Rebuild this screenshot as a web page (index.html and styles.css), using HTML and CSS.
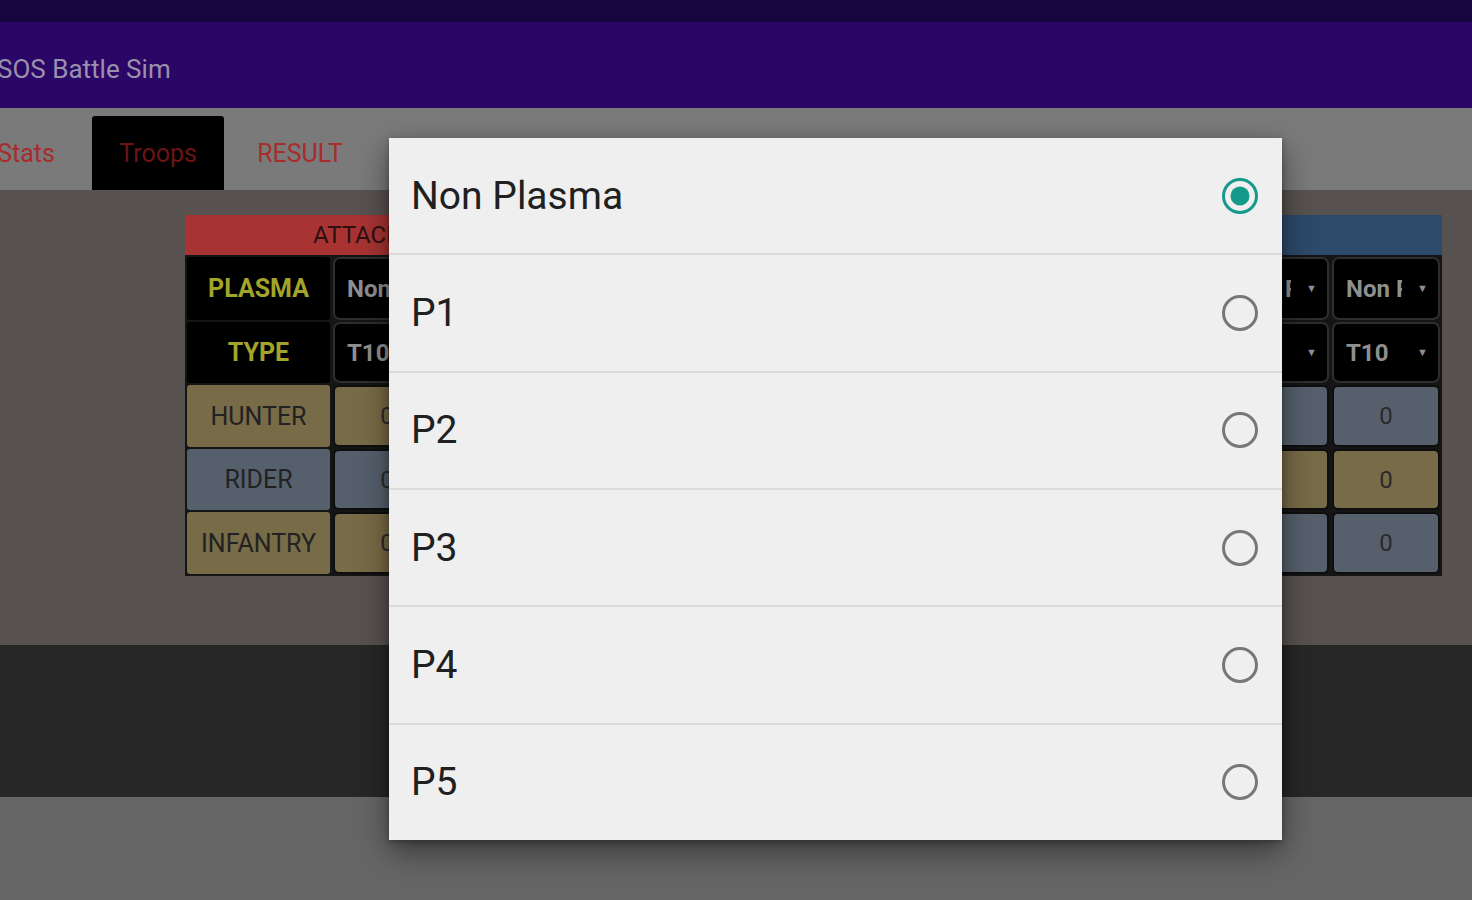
FILE: index.html
```html
<!DOCTYPE html>
<html>
<head>
<meta charset="utf-8">
<title>SOS Battle Sim</title>
<link rel="stylesheet" href="styles.css">
</head>
<body>
<div class="app">
  <div class="statusbar"></div>
  <header class="toolbar"><span class="title">SOS Battle Sim</span></header>
  <nav class="tabs">
    <div class="tab">Stats</div>
    <div class="tab active">Troops</div>
    <div class="tab wide">RESULT</div>
  </nav>
  <main class="content">
    <div class="table">
      <div class="head attacker">ATTACKER</div>
      <div class="head defender">DEFENDER</div>

      <div class="label dark">PLASMA</div>
      <div class="sel"><span class="val">Non Plasma</span><span class="arr">▼</span></div>
      <div class="sel"><span class="val">Non Plasma</span><span class="arr">▼</span></div>
      <div class="sel"><span class="val">Non Plasma</span><span class="arr">▼</span></div>
      <div class="sel"><span class="val">Non Plasma</span><span class="arr">▼</span></div>
      <div class="sel"><span class="val">Non Plasma</span><span class="arr">▼</span></div>
      <div class="sel"><span class="val">Non Plasma</span><span class="arr">▼</span></div>
      <div class="sel"><span class="val">Non Plasma</span><span class="arr">▼</span></div>
      <div class="sel"><span class="val">Non Plasma</span><span class="arr">▼</span></div>
      <div class="sel"><span class="val">Non Plasma</span><span class="arr">▼</span></div>
      <div class="sel"><span class="val">Non Plasma</span><span class="arr">▼</span></div>

      <div class="label dark">TYPE</div>
      <div class="sel"><span class="val">T10</span><span class="arr">▼</span></div>
      <div class="sel"><span class="val">T10</span><span class="arr">▼</span></div>
      <div class="sel"><span class="val">T10</span><span class="arr">▼</span></div>
      <div class="sel"><span class="val">T10</span><span class="arr">▼</span></div>
      <div class="sel"><span class="val">T10</span><span class="arr">▼</span></div>
      <div class="sel"><span class="val">T10</span><span class="arr">▼</span></div>
      <div class="sel"><span class="val">T10</span><span class="arr">▼</span></div>
      <div class="sel"><span class="val">T10</span><span class="arr">▼</span></div>
      <div class="sel"><span class="val">T10</span><span class="arr">▼</span></div>
      <div class="sel"><span class="val">T10</span><span class="arr">▼</span></div>

      <div class="label tan">HUNTER</div>
      <div class="num tan">0</div><div class="num tan">0</div><div class="num tan">0</div><div class="num tan">0</div><div class="num tan">0</div>
      <div class="num blue">0</div><div class="num blue">0</div><div class="num blue">0</div><div class="num blue">0</div><div class="num blue">0</div>

      <div class="label blue">RIDER</div>
      <div class="num blue">0</div><div class="num blue">0</div><div class="num blue">0</div><div class="num blue">0</div><div class="num blue">0</div>
      <div class="num tan">0</div><div class="num tan">0</div><div class="num tan">0</div><div class="num tan">0</div><div class="num tan">0</div>

      <div class="label tan">INFANTRY</div>
      <div class="num tan">0</div><div class="num tan">0</div><div class="num tan">0</div><div class="num tan">0</div><div class="num tan">0</div>
      <div class="num blue">0</div><div class="num blue">0</div><div class="num blue">0</div><div class="num blue">0</div><div class="num blue">0</div>
    </div>
  </main>
  <div class="band"></div>
  <div class="footer"></div>

  <div class="dialog">
    <div class="opt"><span>Non Plasma</span>
      <svg class="radio" viewBox="0 0 40 40" width="40" height="40"><circle cx="20" cy="20" r="16.5" fill="none" stroke="#14998a" stroke-width="3"/><circle cx="20" cy="20" r="9.5" fill="#14998a"/></svg>
    </div>
    <div class="opt"><span>P1</span>
      <svg class="radio" viewBox="0 0 40 40" width="40" height="40"><circle cx="20" cy="20" r="16.5" fill="none" stroke="#777" stroke-width="3"/></svg>
    </div>
    <div class="opt"><span>P2</span>
      <svg class="radio" viewBox="0 0 40 40" width="40" height="40"><circle cx="20" cy="20" r="16.5" fill="none" stroke="#777" stroke-width="3"/></svg>
    </div>
    <div class="opt"><span>P3</span>
      <svg class="radio" viewBox="0 0 40 40" width="40" height="40"><circle cx="20" cy="20" r="16.5" fill="none" stroke="#777" stroke-width="3"/></svg>
    </div>
    <div class="opt"><span>P4</span>
      <svg class="radio" viewBox="0 0 40 40" width="40" height="40"><circle cx="20" cy="20" r="16.5" fill="none" stroke="#777" stroke-width="3"/></svg>
    </div>
    <div class="opt"><span>P5</span>
      <svg class="radio" viewBox="0 0 40 40" width="40" height="40"><circle cx="20" cy="20" r="16.5" fill="none" stroke="#777" stroke-width="3"/></svg>
    </div>
  </div>
</div>
</body>
</html>
```

FILE: styles.css
```css
* { box-sizing: border-box; }
html, body { margin: 0; padding: 0; }
body {
  width: 1472px;
  height: 900px;
  overflow: hidden;
  font-family: Roboto, "Noto Sans", "Liberation Sans", sans-serif;
  background: #666666;
}
.app {
  position: relative;
  width: 1472px;
  height: 900px;
  display: flex;
  flex-direction: column;
  overflow: hidden;
}
.statusbar {
  height: 22px;
  background: #16053f;
}
.toolbar {
  height: 86px;
  background: #2a0767;
  display: flex;
  align-items: center;
  padding-top: 8px;
}
.title {
  margin-left: -3px;
  font-size: 26px;
  color: #9a91ab;
}
.tabs {
  height: 82px;
  background: #7a7a7a;
  display: flex;
  align-items: flex-end;
  margin-left: -40px;
}
.tab {
  width: 132px;
  height: 74px;
  display: flex;
  align-items: center;
  justify-content: center;
  font-size: 25px;
  color: #a82c2c;
}
.tab.active {
  background: #000;
  color: #6d1414;
  border-radius: 3px 3px 0 0;
}
.tab.wide { width: 152px; }
.content {
  height: 455px;
  background: #57524f;
  padding: 25px 0 0 185px;
}
.table {
  width: 1257px;
  display: grid;
  grid-template-columns: 143px repeat(10, minmax(0, 1fr));
  grid-template-rows: 40px 63px 61px 62px 61px 62px;
  gap: 2px 3px;
  padding: 0 2px 2px;
  background: #151515;
}
.head {
  display: flex;
  align-items: center;
  font-size: 24px;
  margin: 0 -2px;
}
.attacker {
  grid-column: 1 / span 6;
  background: #a83333;
  color: #2e1010;
  padding-left: 128px;
}
.defender {
  grid-column: 7 / span 5;
  background: #2c4a6a;
  color: #10202e;
  justify-content: center;
}
.label {
  display: flex;
  align-items: center;
  justify-content: center;
  font-size: 25px;
  color: #222;
  border-radius: 3px;
}
.label.dark {
  background: #000;
  color: #a3a42a;
  font-weight: bold;
}
.tan { background: #786b47; }
.blue { background: #56606d; }
.sel {
  min-width: 0;
  overflow: hidden;
  background: #000;
  border: 2px solid #2e2e2e;
  border-radius: 7px;
  display: flex;
  align-items: center;
  padding: 0 10px 0 12px;
  color: #8f8f8f;
  font-size: 24px;
  font-weight: bold;
}
.val {
  flex: 1;
  min-width: 0;
  overflow: hidden;
  white-space: nowrap;
}
.arr {
  flex: none;
  font-size: 11px;
  margin-left: 15px;
  color: #8f8f8f;
}
.num {
  min-width: 0;
  border: 2px solid #0e0e0e;
  border-radius: 6px;
  display: flex;
  align-items: center;
  justify-content: center;
  font-size: 24px;
  color: #2a2a2a;
}
.band {
  height: 152px;
  background: #272727;
}
.footer {
  flex: 1;
  background: #666666;
}
.dialog {
  position: absolute;
  left: 389px;
  top: 138px;
  width: 893px;
  height: 702px;
  background: #efefef;
  box-shadow: 0 12px 30px rgba(0, 0, 0, 0.45), 0 2px 6px rgba(0, 0, 0, 0.3);
  display: flex;
  flex-direction: column;
}
.opt {
  flex: 1;
  display: flex;
  align-items: center;
  justify-content: space-between;
  padding: 0 22px;
  font-size: 39px;
  color: #202020;
  border-top: 2px solid #dcdcdc;
}
.opt:first-child { border-top: none; }
.radio { display: block; }
```
